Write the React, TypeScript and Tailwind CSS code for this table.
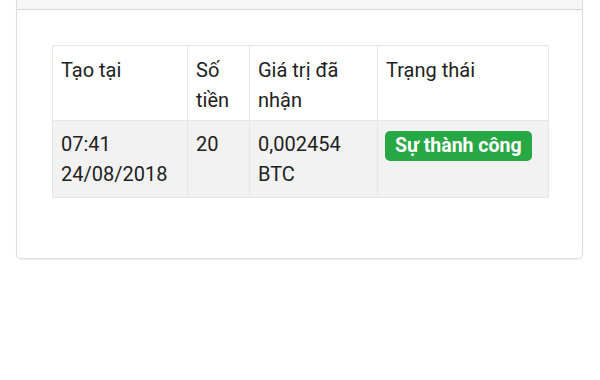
const rows = [
  {
    created: ["07:41", "24/08/2018"],
    amount: "20",
    received: ["0,002454", "BTC"],
    status: "Sự thành công",
  },
];

export default function App() {
  return (
    <div className="h-[380px] w-[600px] bg-white font-['Roboto','Liberation_Sans',sans-serif] text-[20px] leading-[30px] text-[#222]">
      {/* Card */}
      <div className="ml-[16px] w-[567px] rounded-b-[5px] border-x border-b border-[#dcdcdc] shadow-[0_1px_2px_rgba(0,0,0,0.06)]">
        <div className="h-[10px] border-b border-[#d6d6d6] bg-[#f6f6f6]" />

        <div className="px-[35px] pt-[35px] pb-[60px]">
          <table className="w-[496px] table-fixed border-collapse">
            <colgroup>
              <col className="w-[135px]" />
              <col className="w-[62px]" />
              <col className="w-[128px]" />
              <col className="w-[171px]" />
            </colgroup>
            <thead>
              <tr className="h-[75px] bg-white">
                {["Tạo tại", "Số tiền", "Giá trị đã nhận", "Trạng thái"].map((h) => (
                  <th
                    key={h}
                    className="border border-[#e6e6e6] px-[8px] pt-[9px] pb-[5px] text-left align-top font-normal"
                  >
                    {h}
                  </th>
                ))}
              </tr>
            </thead>
            <tbody>
              {rows.map((r) => (
                <tr key={r.amount} className="h-[77px] bg-[#f2f2f2]">
                  <td className="border border-[#e6e6e6] px-[8px] pt-[8px] pb-[6px] align-top">
                    {r.created[0]}
                    <br />
                    {r.created[1]}
                  </td>
                  <td className="border border-[#e6e6e6] px-[8px] pt-[8px] pb-[6px] align-top">{r.amount}</td>
                  <td className="border border-[#e6e6e6] px-[8px] pt-[8px] pb-[6px] align-top">
                    {r.received[0]}
                    <br />
                    {r.received[1]}
                  </td>
                  <td className="border border-[#e6e6e6] px-[7px] pt-[9px] pb-[6px] align-top">
                    <span className="inline-block h-[30px] rounded-[5px] bg-[#28a745] px-[10px] text-[19.5px] leading-[30px] font-bold text-white">
                      {r.status}
                    </span>
                  </td>
                </tr>
              ))}
            </tbody>
          </table>
        </div>
      </div>
    </div>
  );
}
